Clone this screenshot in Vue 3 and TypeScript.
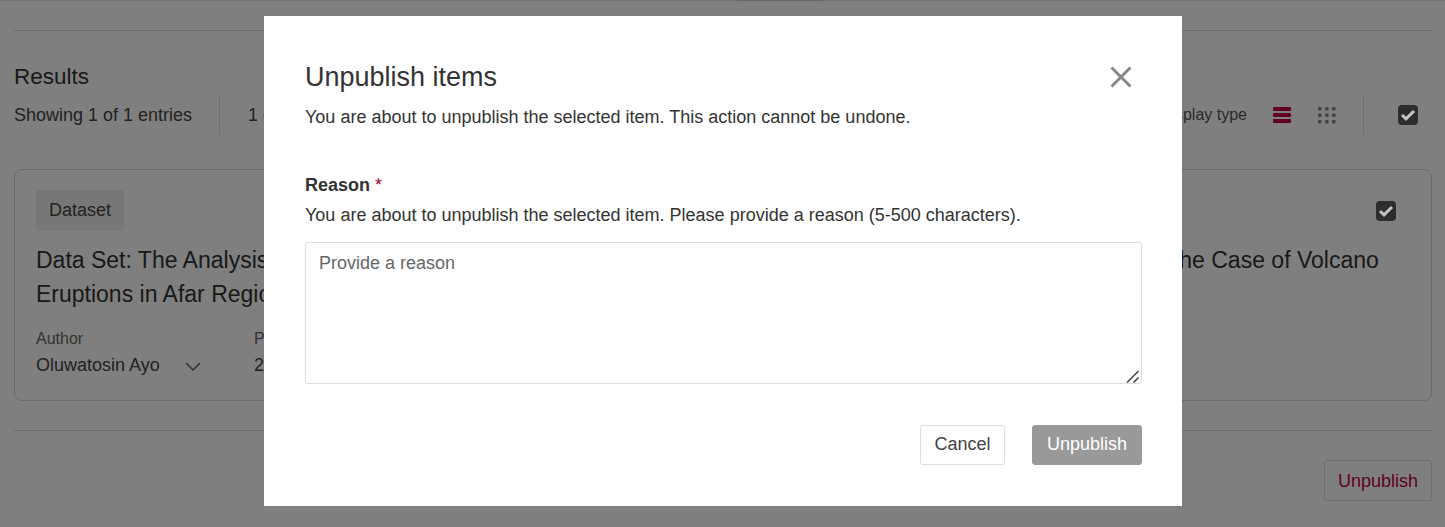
<script setup lang="ts">
import { ref } from 'vue';

const reason = ref('');
const descText = 'You are about to unpublish the selected item.';
const dots = Array.from({ length: 9 }, (_, i) => ({ x: (i % 3) * 7, y: Math.floor(i / 3) * 6.5 }));
</script>

<template>
  <div class="page">
    <div class="top-tab"></div>
    <hr class="rule first" />

    <section class="results">
      <h2>Results</h2>
      <div class="toolbar">
        <span class="count">Showing 1 of 1 entries</span>
        <span class="vsep"></span>
        <span class="selected">1 of 1</span>
        <span class="display-label">Display type</span>
        <svg class="list-icon" width="18" height="16" viewBox="0 0 18 16">
          <rect x="0" y="0" width="18" height="4" rx="1" />
          <rect x="0" y="6" width="18" height="4" rx="1" />
          <rect x="0" y="12" width="18" height="4" rx="1" />
        </svg>
        <svg class="grid-icon" width="18" height="17" viewBox="0 0 18 17">
          <rect v-for="(d, i) in dots" :key="i" :x="d.x" :y="d.y" width="3.6" height="3.6" rx="0.8" />
        </svg>
        <span class="vsep right"></span>
        <span class="check">
          <svg width="16" height="12" viewBox="0 0 16 12"><path d="M2 6 6 9.800 14 2" /></svg>
        </span>
      </div>
    </section>

    <article class="card">
      <div class="card-head">
        <span class="tag">Dataset</span>
        <span class="check">
          <svg width="16" height="12" viewBox="0 0 16 12"><path d="M2 6 6 9.800 14 2" /></svg>
        </span>
      </div>
      <h3>Data Set: The Analysis of Social Media Discourse on Natural Disasters and Risk Perceptions in Eastern Africa: The Case of Volcano Eruptions in Afar Region, Ethiopia</h3>
      <div class="meta">
        <div class="meta-col author">
          <span class="meta-label">Author</span>
          <span class="meta-value">Oluwatosin Ayo
            <svg class="chev" width="16" height="9" viewBox="0 0 16 9"><path d="M1 1l7 7 7-7" /></svg>
          </span>
        </div>
        <div class="meta-col">
          <span class="meta-label">Published</span>
          <span class="meta-value">2023</span>
        </div>
      </div>
    </article>

    <hr class="rule second" />
    <div class="page-foot">
      <button class="outline-btn" type="button">Unpublish</button>
    </div>
  </div>

  <div class="overlay">
    <div class="modal" role="dialog" aria-modal="true">
      <header class="modal-head">
        <div>
          <h1>Unpublish items</h1>
          <p class="modal-sub">{{ descText }} This action cannot be undone.</p>
        </div>
        <button class="close" type="button" aria-label="Close">
          <svg width="22" height="22" viewBox="0 0 22 22"><path d="M1.5 1.5l19 19M20.500 1.500l-19 19" /></svg>
        </button>
      </header>

      <label class="field-label" for="reason">Reason <span class="req">*</span></label>
      <p class="field-help">{{ descText }} Please provide a reason (5-500 characters).</p>
      <div class="reason-wrap">
        <textarea id="reason" v-model="reason" class="reason" placeholder="Provide a reason"></textarea>
        <svg class="grip" width="14" height="13" viewBox="0 0 14 13"><path d="M1 12.500 12.500 1M7.500 12.500l5-5" /></svg>
      </div>

      <footer class="modal-foot">
        <button class="btn cancel" type="button">Cancel</button>
        <button class="btn submit" type="button" disabled>Unpublish</button>
      </footer>
    </div>
  </div>
</template>

<style>
html, body {
  margin: 0;
  height: 100%;
  overflow: hidden;
  background: #fff;
}
</style>

<style scoped>
* {
  box-sizing: border-box;
}

.page {
  height: 527px;
  padding: 0 13px 0 14px;
  font-family: "Liberation Sans", Arial, sans-serif;
  color: #333;
  background: #fff;
  box-shadow: inset 0 1px 0 #e4e4e4;
  overflow: hidden;
}

.top-tab {
  width: 84px;
  height: 1px;
  margin-left: 724px;
  background: #ccc;
}

.rule {
  margin: 0;
  border: 0;
  border-top: 1px solid #d6d6d6;
}
.rule.first { margin-top: 29px; }
.rule.second { margin-top: 29px; }

.results {
  padding-top: 33px;
}
.results h2 {
  margin: 0;
  font-size: 22.5px;
  line-height: 26px;
  font-weight: 400;
  color: #333;
}

.toolbar {
  display: flex;
  align-items: center;
  height: 40px;
  margin-top: 5px;
  font-size: 18px;
  color: #444;
}
.count { width: 205px; }
.vsep {
  width: 1px;
  height: 40px;
  background: #dcdcdc;
}
.selected { margin-left: 28px; }
.display-label {
  margin-left: auto;
  font-size: 16px;
  color: #555;
}
.list-icon {
  margin-left: 26px;
  fill: #c0004a;
}
.grid-icon {
  margin-left: 27px;
  fill: #8a8a8a;
}
.vsep.right {
  margin-left: 27px;
}
.check {
  display: inline-flex;
  align-items: center;
  justify-content: center;
  width: 20px;
  height: 20px;
  border-radius: 4px;
  background: #5a5a5a;
}
.toolbar .check {
  margin-left: 34px;
  margin-right: 14px;
}
/* the tick reads brighter than the dimmed page, so it sits above the backdrop */
.check svg {
  position: relative;
  z-index: 1;
}
.check path {
  fill: none;
  stroke: #c4c4c4;
  stroke-width: 3;
}

.card {
  height: 232px;
  margin-top: 34px;
  padding: 20px 35px 0 21px;
  border: 1px solid #d4d4d4;
  border-radius: 8px;
}
.card-head {
  display: flex;
  align-items: center;
  justify-content: space-between;
}
.tag {
  padding: 0 13px;
  height: 41px;
  line-height: 40px;
  background: #eee;
  border-radius: 3px;
  font-size: 18px;
  color: #444;
}
.card h3 {
  margin: 12px 0 0;
  font-size: 23px;
  line-height: 34px;
  font-weight: 400;
  color: #333;
}
.meta {
  display: flex;
  margin-top: 18px;
}
.meta-col {
  display: flex;
  flex-direction: column;
}
.meta-col.author { width: 218px; }
.meta-label {
  font-size: 16px;
  line-height: 20px;
  color: #666;
}
.meta-value {
  margin-top: 5px;
  font-size: 18px;
  line-height: 22px;
  color: #444;
}
.chev {
  margin-left: 20px;
  fill: none;
  stroke: #666;
  stroke-width: 1.5;
}

.page-foot {
  display: flex;
  justify-content: flex-end;
  padding-top: 29px;
}
.outline-btn {
  width: 108px;
  height: 41px;
  padding: 1px 0 0;
  background: transparent;
  border: 1px solid #ddd;
  border-radius: 3px;
  color: #c0004a;
  font: 18px "Liberation Sans", Arial, sans-serif;
}

.overlay {
  position: fixed;
  inset: 0;
  display: flex;
  justify-content: center;
  align-items: flex-start;
  padding: 16px 0 0 1px;
  background: rgba(0, 0, 0, 0.5);
  font-family: "Liberation Sans", Arial, sans-serif;
}

.modal {
  width: 918px;
  height: 490px;
  padding: 0 40px 0 41px;
  background: #fff;
  color: #333;
}
.modal-head {
  display: flex;
  justify-content: space-between;
  align-items: flex-start;
  padding-top: 45px;
}
.modal-head h1 {
  margin: 0;
  font-size: 27px;
  line-height: 32px;
  font-weight: 400;
  color: #333;
}
.modal-sub {
  margin: 12px 0 0;
  font-size: 18px;
  line-height: 24px;
  color: #333;
}
.close {
  width: 22px;
  height: 22px;
  margin: 5px 10px 0 0;
  padding: 0;
  border: 0;
  background: none;
}
.close path {
  fill: none;
  stroke: #888;
  stroke-width: 3;
}

.field-label {
  display: block;
  margin-top: 44px;
  font-size: 18px;
  line-height: 24px;
  font-weight: 700;
  color: #333;
}
.req {
  font-weight: 400;
  color: #a5003a;
}
.field-help {
  margin: 6px 0 0;
  font-size: 18px;
  line-height: 24px;
  color: #333;
}
.reason-wrap {
  position: relative;
  margin-top: 15px;
}
.reason {
  display: block;
  width: 100%;
  height: 142px;
  padding: 8px 13px;
  border: 1px solid #ddd;
  border-radius: 3px;
  font: 18px/24px "Liberation Sans", Arial, sans-serif;
  color: #333;
  outline: none;
  resize: none;
}
.reason::placeholder {
  color: #666;
  opacity: 1;
}
.grip {
  position: absolute;
  right: 2px;
  bottom: 1px;
  fill: none;
  stroke: #444;
  stroke-width: 1.5;
}

.modal-foot {
  display: flex;
  justify-content: flex-end;
  gap: 27px;
  margin-top: 41px;
}
.btn {
  height: 40px;
  padding: 0 0 2px;
  border-radius: 3px;
  font: 18px "Liberation Sans", Arial, sans-serif;
}
.cancel {
  width: 85px;
  background: #fff;
  border: 1px solid #ddd;
  color: #444;
}
.submit {
  width: 110px;
  background: #999;
  border: 1px solid #999;
  color: #fff;
}
</style>
